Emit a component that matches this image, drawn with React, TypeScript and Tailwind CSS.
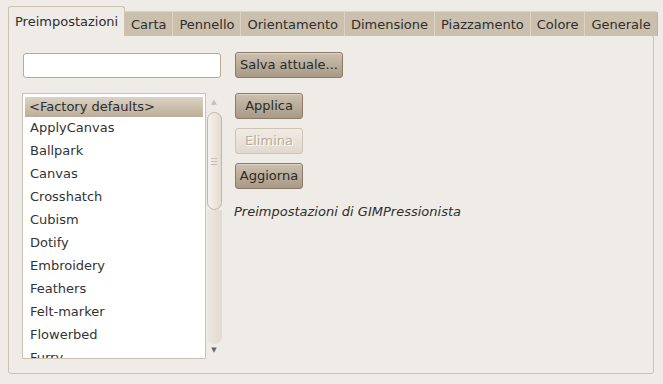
import React from "react";

const tabs = ["Carta", "Pennello", "Orientamento", "Dimensione", "Piazzamento", "Colore", "Generale"];
const items = [
  "ApplyCanvas",
  "Ballpark",
  "Canvas",
  "Crosshatch",
  "Cubism",
  "Dotify",
  "Embroidery",
  "Feathers",
  "Felt-marker",
  "Flowerbed",
  "Furry",
];

const font = { fontFamily: '"DejaVu Sans", "Noto Sans", sans-serif' };

function Btn({ children, disabled, w }: { children: React.ReactNode; disabled?: boolean; w: string }) {
  return disabled ? (
    <div
      className={`${w} h-[26px] flex items-center justify-center rounded-[3px] border border-[#cfc4b4] bg-gradient-to-b from-[#efebe6] to-[#e1d9ce] text-[13px] text-[#b7ad9f] [text-shadow:1px_1px_0_#ffffff]`}
    >
      {children}
    </div>
  ) : (
    <div
      className={`${w} h-[26px] flex items-center justify-center rounded-[3px] border border-[#8c7c67] bg-gradient-to-b from-[#cbbfae] to-[#a89a86] text-[13px] text-[#2b2b2b] shadow-[inset_0_1px_0_rgba(255,255,255,0.35)]`}
    >
      {children}
    </div>
  );
}

export default function App() {
  return (
    <div className="w-[663px] h-[384px] bg-[#efebe7] text-[#333333] overflow-hidden" style={font}>
      <div className="pl-[8px] pt-[6px] w-[655px]">
        {/* tab row */}
        <div className="flex items-end h-[30px] relative z-10">
          <div className="h-[30px] px-[6px] pt-[5px] bg-[#efebe7] border border-b-0 border-[#cdc2b1] rounded-t-[3px] text-[13px] text-[#2e2e2e] w-[117px]">
            Preimpostazioni
          </div>
          {tabs.map((t, i) => (
            <div
              key={t}
              className={`h-[25px] px-[6px] pt-[3px] bg-[#cbbfad] border-t border-[#ddd3c5] ${
                i > 0 ? "border-l border-l-[#ddd3c5]" : ""
              } ${i === tabs.length - 1 ? "border-r border-r-[#bdb09c] rounded-tr-[3px]" : ""} text-[13px] text-[#2e2e2e] leading-[20px]`}
            >
              {t}
            </div>
          ))}
        </div>
        {/* panel */}
        <div className="-mt-px h-[339px] w-[646px] border border-[#cdc2b1] rounded-b-[3px] rounded-tr-[3px] bg-[#efebe7] pl-[13px] pt-[16px] flex gap-[13px]">
          <div className="flex flex-col w-[200px]">
            <div className="h-[25px] w-[198px] mt-px ml-px rounded-[3px] border border-[#b7a992] bg-white" />
            <div className="mt-[15px] flex h-[266px]">
              <div className="w-[184px] h-[266px] border border-[#cdc2b1] bg-white px-[2px] pt-[3px] overflow-hidden">
                <div className="h-[20px] bg-gradient-to-b from-[#dbd2c4] to-[#bcae99] text-[13px] text-[#2e2e2e] pl-[4px] leading-[20px]">
                  &lt;Factory defaults&gt;
                </div>
                {items.map((it) => (
                  <div key={it} className="h-[23px] pl-[5px] leading-[22px] text-[13px] text-[#333333]">
                    {it}
                  </div>
                ))}
              </div>
              <div className="w-[16px] h-[266px] flex flex-col items-center">
                <div className="h-[18px] flex items-center justify-center text-[7px] text-[#c7bdb0]">▲</div>
                <div className="w-[15px] h-[98px] mt-[1px] rounded-[8px] border border-[#c2b5a2] bg-gradient-to-r from-[#f4f1ed] to-[#e4dcd1] flex flex-col items-center justify-center gap-[2px]">
                  <div className="w-[6px] h-px bg-[#c9beaf]" />
                  <div className="w-[6px] h-px bg-[#c9beaf]" />
                  <div className="w-[6px] h-px bg-[#c9beaf]" />
                </div>
                <div className="w-[15px] h-[134px] rounded-b-[8px] bg-gradient-to-r from-[#ece7e1] to-[#e2dbd1]" />
                <div className="h-[12px] flex items-center justify-center text-[7px] text-[#6a6460]">▼</div>
              </div>
            </div>
          </div>
          <div className="flex flex-col">
            <div className="h-[26px]">
              <Btn w="w-[108px]">Salva attuale...</Btn>
            </div>
            <div className="mt-[15px] flex flex-col gap-[9px]">
              <Btn w="w-[68px]">Applica</Btn>
              <Btn w="w-[68px]" disabled>
                Elimina
              </Btn>
              <Btn w="w-[68px]">Aggiorna</Btn>
            </div>
            <div className="mt-[13px] text-[13px] italic text-[#2e2e2e] -ml-px">
              Preimpostazioni di GIMPressionista
            </div>
          </div>
        </div>
      </div>
    </div>
  );
}
